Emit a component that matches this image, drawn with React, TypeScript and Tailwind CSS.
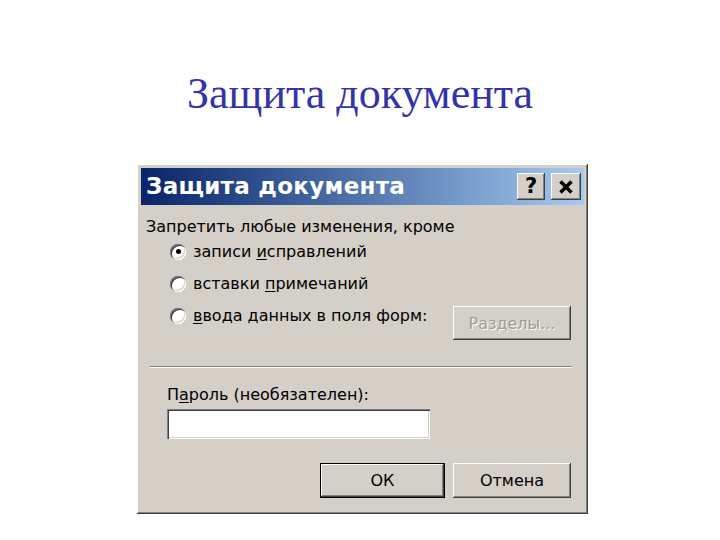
export default function App() {
  const raised =
    'bg-[#d4d0c8] shadow-[inset_-1px_-1px_#404040,inset_1px_1px_#ffffff,inset_-2px_-2px_#808080,inset_2px_2px_#d4d0c8]';
  const sunken =
    'shadow-[inset_1px_1px_#808080,inset_2px_2px_#404040,inset_-1px_-1px_#ffffff,inset_-2px_-2px_#d4d0c8]';
  const ui = "font-['DejaVu_Sans',sans-serif] text-[16px] text-black";

  const Radio = ({ checked }: { checked?: boolean }) => (
    <span className={`w-[16px] h-[16px] rounded-full bg-white flex items-center justify-center shrink-0 ${sunken}`}>
      {checked && <span className="w-[5px] h-[5px] rounded-full bg-black" />}
    </span>
  );

  return (
    <div className="w-[720px] h-[540px] bg-white flex flex-col">
      <h1 className="mt-[66px] text-center font-['Liberation_Serif',serif] text-[44px] leading-[56px] text-[#3333aa]">
        Защита документа
      </h1>

      <div className={`ml-[137px] mt-[42px] w-[451px] h-[350px] p-[4px] flex flex-col ${raised} ${ui}`}>
        {/* title bar */}
        <div className="h-[37px] flex items-center bg-gradient-to-r from-[#0a246a] to-[#a6caf0] pl-[5px] pr-[3px]">
          <span className="text-white font-bold text-[23px] tracking-[0.3px] leading-none">Защита документа</span>
          <div className="ml-auto flex gap-[6px]">
            <span className={`w-[28px] h-[27px] flex items-center justify-center font-bold text-[21px] leading-none ${raised}`}>?</span>
            <span className={`w-[30px] h-[27px] flex items-center justify-center ${raised}`}>
              <svg width="16" height="14" viewBox="0 0 16 14">
                <path d="M2.5 1.5 L13.5 12.5 M13.5 1.5 L2.5 12.5" stroke="#000" strokeWidth="3.5" />
              </svg>
            </span>
          </div>
        </div>

        <div className="pl-[5px] pt-[12px] leading-[19px]">Запретить любые изменения, кроме</div>

        <div className="pl-[29px] pt-[6px] flex flex-col gap-[13px]">
          <div className="flex items-center gap-[7px] leading-[19px]">
            <Radio checked />
            <span>записи <span className="underline underline-offset-2">и</span>справлений</span>
          </div>
          <div className="flex items-center gap-[7px] leading-[19px]">
            <Radio />
            <span>вставки <span className="underline underline-offset-2">п</span>римечаний</span>
          </div>
          <div className="flex items-start leading-[19px]">
            <span className="h-[19px] flex items-center">
              <Radio />
            </span>
            <span className="ml-[7px]"><span className="underline underline-offset-2">в</span>вода данных в поля форм:</span>
            <span className={`ml-auto mr-[13px] w-[118px] h-[34px] flex items-center justify-center text-[#a09c94] [text-shadow:1px_1px_#ffffff] ${raised}`}>
              Разделы...
            </span>
          </div>
        </div>

        <div className="ml-[9px] mr-[12px] mt-[26px] h-[2px] border-t border-[#808080] border-b border-b-white" />

        <div className="pl-[26px] pt-[17px] leading-[19px]">
          П<span className="underline underline-offset-2">а</span>роль (необязателен):
        </div>
        <div className={`ml-[26px] mt-[5px] w-[263px] h-[30px] bg-white ${sunken}`} />

        <div className="mt-[24px] flex justify-end gap-[8px] pr-[13px]">
          <span className="w-[125px] h-[35px] flex items-center justify-center bg-[#d4d0c8] border border-black shadow-[inset_-1px_-1px_#404040,inset_1px_1px_#ffffff,inset_-2px_-2px_#808080]">
            ОК
          </span>
          <span className={`w-[118px] h-[35px] flex items-center justify-center ${raised}`}>Отмена</span>
        </div>
      </div>
    </div>
  );
}
